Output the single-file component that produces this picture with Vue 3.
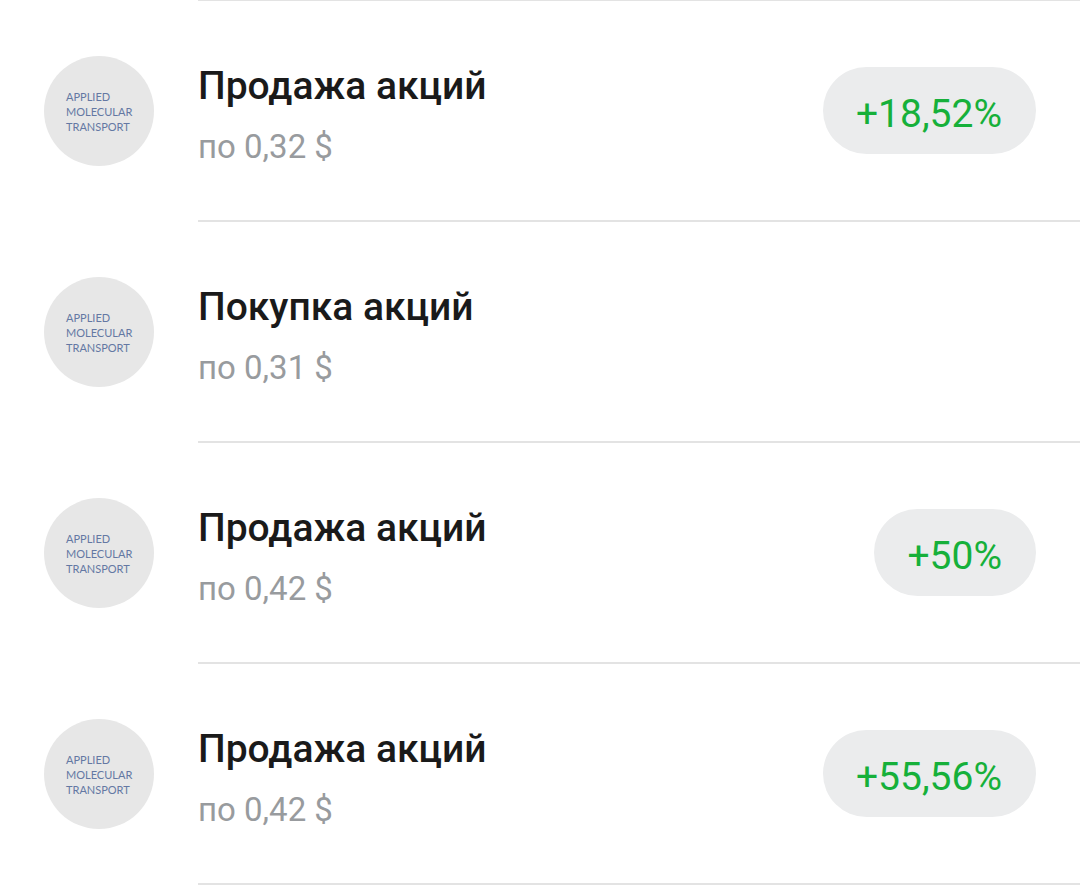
<template>
  <ul class="operations">
    <li v-for="item in operations" :key="item.id" class="operation">
      <div class="logo">
        <span>APPLIED</span>
        <span>MOLECULAR</span>
        <span>TRANSPORT</span>
      </div>
      <div class="body">
        <div class="info">
          <h2 class="title">{{ item.title }}</h2>
          <p class="price">по {{ item.price }} $</p>
        </div>
        <span v-if="item.profit" class="profit">{{ item.profit }}</span>
      </div>
    </li>
  </ul>
</template>

<script setup>
import { ref } from "vue";

const operations = ref([
  { id: 1, title: "Продажа акций", price: "0,32", profit: "+18,52%" },
  { id: 2, title: "Покупка акций", price: "0,31", profit: "" },
  { id: 3, title: "Продажа акций", price: "0,42", profit: "+50%" },
  { id: 4, title: "Продажа акций", price: "0,42", profit: "+55,56%" },
]);
</script>

<style>
body {
  background-color: #fff;
}
</style>

<style scoped>
.operations {
  margin: 0;
  padding: 0;
  list-style: none;
  font-family: Roboto, sans-serif;
}

.operation {
  display: flex;
  align-items: flex-end;
  gap: 44px;
  padding-left: 44px;
}

.logo {
  display: flex;
  flex-direction: column;
  justify-content: center;
  flex-shrink: 0;
  box-sizing: border-box;
  width: 110px;
  height: 110px;
  margin-bottom: 56px;
  padding-left: 22px;
  border-radius: 50%;
  background-color: #e7e7e7;
  color: #6478a3;
  font-family: Lato, sans-serif;
  font-size: 11px;
  line-height: 15px;
}

.body {
  display: flex;
  align-items: center;
  justify-content: space-between;
  flex: 1;
  min-height: 219px;
  padding-right: 44px;
  border-bottom: 2px solid #e3e3e3;
}

.operation:first-child .body {
  border-top: 1px solid #e3e3e3;
}

.info {
  padding-top: 8px;
}

.title {
  margin: 0;
  color: #1a1a1a;
  font-size: 39px;
  font-weight: 500;
  line-height: 64px;
}

.price {
  margin: 0;
  color: #989b9e;
  font-size: 33px;
  line-height: 58px;
}

.profit {
  padding: 7px 34px 0 33px;
  border-radius: 44px;
  background-color: #ebeced;
  color: #16b03a;
  font-size: 39px;
  line-height: 80px;
}
</style>
